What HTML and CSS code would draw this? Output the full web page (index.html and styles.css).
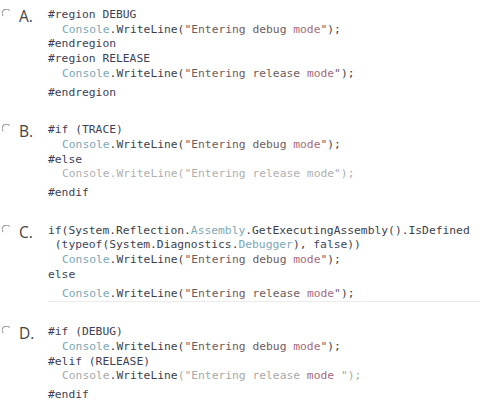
FILE: index.html
```html
<!DOCTYPE html>
<html>
<head>
<meta charset="utf-8">
<link rel="stylesheet" href="styles.css">
</head>
<body>
<div class="quiz">
  <div class="option">
    <div class="choice">
      <svg class="radio" width="10" height="10" viewBox="0 0 10 10"><path d="M1.2 7.2 A4 4 0 0 1 7.6 1.6" fill="none" stroke="#9a9a9a" stroke-width="1.1"/></svg>
      <span class="letter">A.</span>
    </div>
    <div class="code">
      <div class="ln"><span class="kw">#region DEBUG</span></div>
      <div class="ln in"><span class="ty">Console</span>.WriteLine(<span class="st">"Entering debug <span class="pk">mode</span>"</span>);</div>
      <div class="ln"><span class="kw">#endregion</span></div>
      <div class="ln"><span class="kw">#region RELEASE</span></div>
      <div class="ln in"><span class="ty">Console</span>.WriteLine(<span class="st">"Entering release <span class="pk">mode</span>"</span>);</div>
      <div class="ln last"><span class="kw">#endregion</span></div>
    </div>
  </div>

  <div class="option">
    <div class="choice">
      <svg class="radio" width="10" height="10" viewBox="0 0 10 10"><path d="M1.2 7.2 A4 4 0 0 1 7.6 1.6" fill="none" stroke="#9a9a9a" stroke-width="1.1"/></svg>
      <span class="letter">B.</span>
    </div>
    <div class="code">
      <div class="ln"><span class="kw">#if (TRACE)</span></div>
      <div class="ln in"><span class="ty">Console</span>.WriteLine(<span class="st">"Entering debug <span class="pk">mode</span>"</span>);</div>
      <div class="ln"><span class="kw">#else</span></div>
      <div class="ln in faded">Console.WriteLine("Entering release mode");</div>
      <div class="ln last"><span class="kw">#endif</span></div>
    </div>
  </div>

  <div class="option">
    <div class="choice">
      <svg class="radio" width="10" height="10" viewBox="0 0 10 10"><path d="M1.2 7.2 A4 4 0 0 1 7.6 1.6" fill="none" stroke="#9a9a9a" stroke-width="1.1"/></svg>
      <span class="letter">C.</span>
    </div>
    <div class="code">
      <div class="ln">if(System.Reflection.<span class="ty">Assembly</span>.GetExecutingAssembly().IsDefined</div>
      <div class="ln"> (<span class="kb">typeof</span>(System.Diagnostics.<span class="ty">Debugger</span>), <span class="kb">false</span>))</div>
      <div class="ln in"><span class="ty">Console</span>.WriteLine(<span class="st">"Entering debug <span class="pk">mode</span>"</span>);</div>
      <div class="ln"><span class="kw">else</span></div>
      <div class="ln in last rule"><span class="ty">Console</span>.WriteLine(<span class="st">"Entering release <span class="pk">mode</span>"</span>);</div>
    </div>
  </div>

  <div class="option">
    <div class="choice">
      <svg class="radio" width="10" height="10" viewBox="0 0 10 10"><path d="M1.2 7.2 A4 4 0 0 1 7.6 1.6" fill="none" stroke="#9a9a9a" stroke-width="1.1"/></svg>
      <span class="letter">D.</span>
    </div>
    <div class="code">
      <div class="ln"><span class="kw">#if (DEBUG)</span></div>
      <div class="ln in"><span class="ty">Console</span>.WriteLine(<span class="st">"Entering debug <span class="pk">mode</span>"</span>);</div>
      <div class="ln"><span class="kw">#elif (RELEASE)</span></div>
      <div class="ln in"><span class="lt">Console</span>.WriteLine<span class="lt">("Entering release </span><span class="pk">mode</span><span class="lt"> ");</span></div>
      <div class="ln last"><span class="kw">#endif</span></div>
    </div>
  </div>
</div>
</body>
</html>
```

FILE: styles.css
```css
html, body {
  margin: 0;
  padding: 0;
  background: #ffffff;
  overflow: hidden;
}

.quiz {
  display: flex;
  flex-direction: column;
  padding-top: 8px;
}

.option {
  display: flex;
  align-items: flex-start;
  padding-bottom: 23px;
}

.option:last-child {
  padding-bottom: 0;
}

.choice {
  width: 48px;
  display: flex;
  align-items: center;
  height: 15px;
  flex: none;
}

.radio {
  margin-left: 2px;
  margin-top: -3px;
  flex: none;
}

.letter {
  margin-left: 7px;
  font-family: "Open Sans", "Noto Sans", sans-serif;
  font-size: 15.5px;
  color: #444444;
  line-height: 15px;
  position: relative;
  top: 1px;
}

.code {
  font-family: "DejaVu Sans Mono", monospace;
  font-size: 11.3px;
  line-height: 14.7px;
  color: #3b3f4c;
}

.ln {
  white-space: pre;
}

.ln.in {
  padding-left: 14px;
}

.ln.last {
  margin-top: 4px;
}

.ln.rule {
  border-bottom: 1px solid #ececec;
  width: 418px;
}

.kw { color: #3d4158; }
.kb { color: #3b4766; }
.ty { color: #7ba7b7; }
.st { color: #6e5c5e; }
.pk { color: #a36a7e; }
.lt { color: #a8a8a8; }
.faded { color: #b0b0b0; }
```
